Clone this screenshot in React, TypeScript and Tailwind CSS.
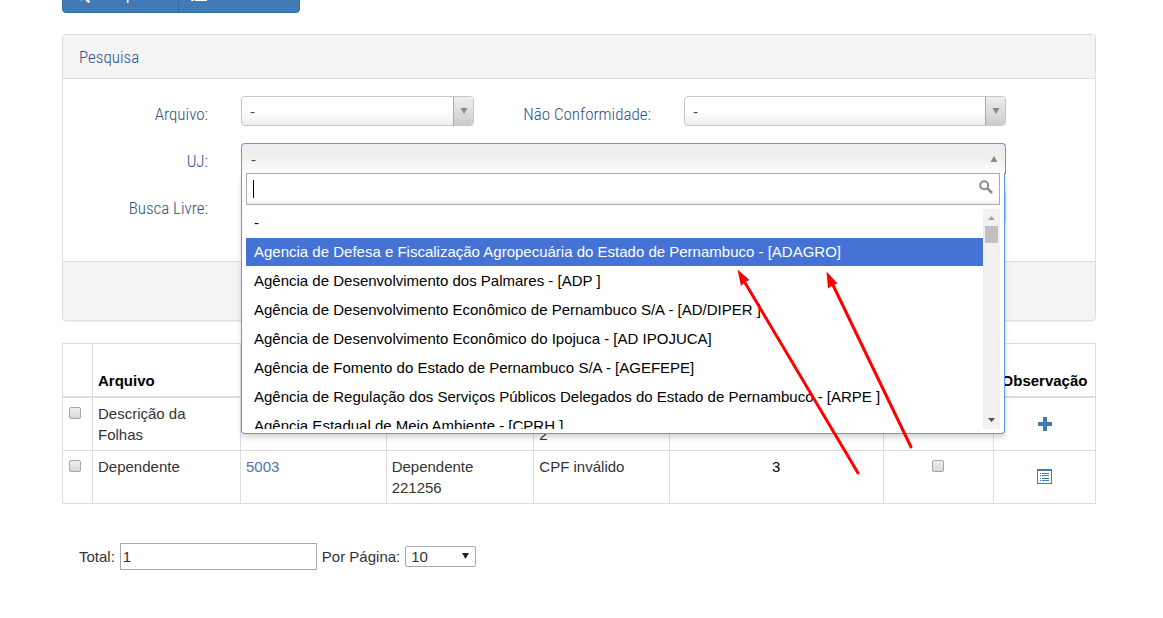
import { FaSearch } from 'react-icons/fa';

interface Row {
  arquivo: string;
  codigo: string;
  registro: string;
  motivo: string;
  quantidade: string;
  icon: 'plus' | 'list';
}

const unidades = [
  '-',
  'Agencia de Defesa e Fiscalização Agropecuária do Estado de Pernambuco - [ADAGRO]',
  'Agência de Desenvolvimento dos Palmares - [ADP ]',
  'Agência de Desenvolvimento Econômico de Pernambuco S/A - [AD/DIPER ]',
  'Agência de Desenvolvimento Econômico do Ipojuca - [AD IPOJUCA]',
  'Agência de Fomento do Estado de Pernambuco S/A - [AGEFEPE]',
  'Agência de Regulação dos Serviços Públicos Delegados do Estado de Pernambuco - [ARPE ]',
  'Agência Estadual de Meio Ambiente - [CPRH ]',
];

const rows: Row[] = [
  { arquivo: 'Descrição da Folhas', codigo: '', registro: '', motivo: '\n2', quantidade: '', icon: 'plus' },
  { arquivo: 'Dependente', codigo: '5003', registro: 'Dependente 221256', motivo: 'CPF inválido', quantidade: '3', icon: 'list' },
];

const title = "font-['Roboto_Condensed','Roboto',sans-serif] text-[17px] leading-6 font-light text-[#2f5089]";
const label = `${title} pt-1.5 text-right whitespace-nowrap`;
const cell = 'border border-[#ddd] p-[5px]';

function Triangle({ up = false }: { up?: boolean }) {
  return (
    <svg viewBox="0 0 8 6" className="h-[6px] w-2 fill-[#888]" aria-hidden="true">
      <path d={up ? 'M4 0 7.5 6H.5z' : 'M.5 0h7L4 6z'} />
    </svg>
  );
}

function FieldSelect({ id }: { id: string }) {
  return (
    <div className="relative">
      <select
        id={id}
        className="block h-[30px] w-full appearance-none rounded border border-[#c6c6c6] bg-linear-to-b from-white from-50% to-[#eee] pl-2 text-[#444]"
      >
        <option>-</option>
      </select>
      <span className="pointer-events-none absolute inset-y-px right-px flex w-5 items-center justify-center rounded-r-[3px] border-l border-[#aaa] bg-linear-to-b from-[#eee] to-[#ccc]">
        <Triangle />
      </span>
    </div>
  );
}

function Checkbox({ label }: { label: string }) {
  return (
    <input
      type="checkbox"
      aria-label={label}
      className="block size-3 appearance-none rounded-[2px] border border-[#a6a6a6] bg-linear-to-b from-[#eee] to-[#d8d8d8]"
    />
  );
}

function UnidadeSelect() {
  return (
    <div className="relative h-[30px]">
      <button
        id="uj"
        type="button"
        aria-expanded="true"
        className="flex h-[31px] w-full items-center justify-between rounded-t border border-b-0 border-[#5897fb] bg-linear-to-b from-[#eee] from-40% to-white pr-[7px] pl-[9px] text-[#444]"
      >
        <span>-</span>
        <Triangle up />
      </button>
      <div className="absolute top-[30px] right-px left-0 z-10 rounded-b border border-t-0 border-[#5897fb] bg-white px-1 pb-1 shadow-[0_4px_5px_rgba(0,0,0,0.15)]">
        <div className="relative">
          <input
            type="text"
            aria-label="Filtrar UJ"
            className="block h-8 w-full border border-[#aaa] bg-linear-to-b from-white from-85% to-[#eee] px-1.5 outline-none"
          />
          <span className="absolute top-[7px] left-[7px] h-[18px] w-px bg-black" />
          <svg viewBox="0 0 14 14" className="absolute top-[7px] right-[7px] size-[14px]" fill="none" stroke="#8c8c8c" aria-hidden="true">
            <circle cx="5.2" cy="5.2" r="4" strokeWidth="2" />
            <path d="M8.4 8.4 13 13" strokeWidth="2.6" />
          </svg>
        </div>
        <div className="mt-1 flex h-[220px]">
          <ul role="listbox" aria-label="UJ" className="flex min-w-0 flex-1 flex-col gap-px overflow-hidden text-black">
            {unidades.map((nome, i) => (
              <li
                key={nome}
                role="option"
                aria-selected={i === 1}
                className={`shrink-0 px-2 leading-7 whitespace-nowrap ${i === 1 ? 'bg-[#4573d5] text-white' : ''}`}
              >
                {nome}
              </li>
            ))}
          </ul>
          <div className="flex w-[17px] flex-col items-center justify-between bg-[#f1f1f1]">
            <div className="flex flex-col items-center">
              <svg viewBox="0 0 17 17" className="size-[17px] fill-[#a3a3a3]" aria-hidden="true">
                <path d="M5 11h7L8.500 7z" />
              </svg>
              <span className="h-[17px] w-[13px] bg-[#c1c1c1]" />
            </div>
            <svg viewBox="0 0 17 17" className="size-[17px] fill-[#505050]" aria-hidden="true">
              <path d="M5 6h7l-3.500 4z" />
            </svg>
          </div>
        </div>
      </div>
    </div>
  );
}

// Red markers pointing at the name and the acronym of the chosen unit
function Arrows() {
  return (
    <svg viewBox="0 0 180 210" className="pointer-events-none absolute top-[268px] left-[735px] z-20 h-[210px] w-[180px]" aria-hidden="true">
      <g stroke="#f00" strokeWidth="3" strokeLinecap="round">
        <path d="M9 13 123 205" />
        <path d="M97 15 176 179" />
      </g>
      <g fill="#f00">
        <path d="M2.500 1.500 14.500 12 10 14 6 18z" />
        <path d="M91.500 3.500 102.500 15.500 98 17 93 20.500z" />
      </g>
    </svg>
  );
}

export default function App() {
  return (
    <div className="relative pr-[67px] pl-[62px] font-['Liberation_Sans',sans-serif] text-[15px] leading-[21px] text-[#333]">
      <div className="flex h-[13px] items-end overflow-hidden">
        <button type="button" className="flex h-9 w-[117px] shrink-0 items-center gap-2 rounded-l border border-[#2e6da4] bg-[#417ab5] px-3 text-white">
          <FaSearch />
          <span className="font-['Roboto_Condensed','Roboto',sans-serif] text-base">Pesquisar</span>
        </button>
        <button type="button" className="-ml-px flex h-9 w-[122px] shrink-0 items-center rounded-r border border-[#2e6da4] bg-[#417ab5] px-3 text-white" aria-label="Relatório">
          <svg viewBox="0 0 16 16" className="size-4" fill="none" stroke="currentColor" strokeWidth="2" aria-hidden="true">
            <path d="M5 2h10v11H5zM0 13h3" />
          </svg>
        </button>
      </div>

      <section className="mt-[21px] rounded border border-[#ddd] shadow-[0_1px_1px_rgba(0,0,0,0.05)]">
        <h2 className={`${title} rounded-t border-b border-[#ddd] bg-[#f4f4f4] px-4 pt-[10px] pb-[9px]`}>Pesquisa</h2>
        <form className="grid grid-cols-[145fr_233fr_144fr_322fr] gap-x-[33px] gap-y-[17px] pt-[17px] pr-[89px] pb-9">
          <label htmlFor="arquivo" className={label}>Arquivo:</label>
          <FieldSelect id="arquivo" />
          <label htmlFor="conformidade" className={label}>Não Conformidade:</label>
          <FieldSelect id="conformidade" />
          <label htmlFor="uj" className={label}>UJ:</label>
          <div className="col-span-3">
            <UnidadeSelect />
          </div>
          <label htmlFor="busca" className={label}>Busca Livre:</label>
          <input id="busca" type="text" className="col-span-3 h-[35px] rounded border border-[#ccc] px-3" />
        </form>
        <div className="h-[59px] rounded-b border-t border-[#ddd] bg-[#f4f4f4]" />
      </section>

      <table className="mt-[22px] w-full table-fixed border-collapse">
        <colgroup>
          <col className="w-[30px]" />
          <col className="w-[148px]" />
          <col className="w-[14.100%]" />
          <col className="w-[14.300%]" />
          <col className="w-[13.100%]" />
          <col className="w-[20.700%]" />
          <col className="w-[10.700%]" />
          <col />
        </colgroup>
        <thead>
          <tr className="h-[53px] text-black">
            <td className={`${cell} border-b-2`} />
            <th className={`${cell} border-b-2 text-left align-bottom`}>Arquivo</th>
            <td className={`${cell} border-b-2`} />
            <td className={`${cell} border-b-2`} />
            <td className={`${cell} border-b-2`} />
            <td className={`${cell} border-b-2`} />
            <td className={`${cell} border-b-2`} />
            <th className={`${cell} border-b-2 align-bottom`}>Observação</th>
          </tr>
        </thead>
        <tbody>
          {rows.map((row) => (
            <tr key={row.arquivo} className="h-[53px]">
              <td className={`${cell} align-top`}>
                <div className="pt-1 pl-px"><Checkbox label={`Selecionar ${row.arquivo}`} /></div>
              </td>
              <td className={`${cell} align-top`}>
                <div className="max-w-[110px]">{row.arquivo}</div>
              </td>
              <td className={`${cell} align-top`}>
                {row.codigo && <a href="#" className="text-[#4a76ad]">{row.codigo}</a>}
              </td>
              <td className={`${cell} align-top`}>
                <div className="max-w-[110px]">{row.registro}</div>
              </td>
              <td className={`${cell} align-top whitespace-pre-line`}>{row.motivo}</td>
              <td className={`${cell} text-center align-top text-black`}>{row.quantidade}</td>
              <td className={`${cell} align-top`}>
                <div className="flex justify-center pt-1"><Checkbox label={`Marcar ${row.arquivo}`} /></div>
              </td>
              <td className={`${cell} align-middle`}>
                <a href="#" aria-label="Observação" className="flex justify-center">
                  {row.icon === 'plus' ? (
                    <svg viewBox="0 0 14 14" className="size-[14px] fill-[#417ab5]">
                      <path d="M5 0h4v5h5v4H9v5H5V9H0V5h5z" />
                    </svg>
                  ) : (
                    <svg viewBox="0 0 15 15" className="size-[15px] fill-[#417ab5]">
                      <path fillRule="evenodd" d="M0 0h15v15H0zM1 2h13v12H1z" />
                      <path d="M3 4h1v1H3zM5 4h7v1H5zM3 6h1v1H3zM5 6h7v1H5zM3 9h1v1H3zM5 9h7v1H5zM3 11h1v1H3zM5 11h7v1H5z" />
                    </svg>
                  )}
                </a>
              </td>
            </tr>
          ))}
        </tbody>
      </table>

      <div className="mt-[39px] flex items-center gap-[5px] pl-[17px]">
        <label htmlFor="total">Total:</label>
        <input id="total" type="text" defaultValue="1" className="h-[27px] w-[197px] border border-[#a9a9a9] px-0.5" />
        <label htmlFor="pagina">Por Página:</label>
        <div className="relative">
          <select id="pagina" defaultValue="10" className="block h-[21px] w-[71px] appearance-none rounded-[2px] border border-[#a9a9a9] bg-white pl-[5px] leading-[19px]">
            <option>10</option>
          </select>
          <svg viewBox="0 0 7 6" className="pointer-events-none absolute top-[7px] right-[7px] h-[6px] w-[7px] fill-[#222]" aria-hidden="true">
            <path d="M0 0h7L3.500 6z" />
          </svg>
        </div>
      </div>

      <Arrows />
    </div>
  );
}
